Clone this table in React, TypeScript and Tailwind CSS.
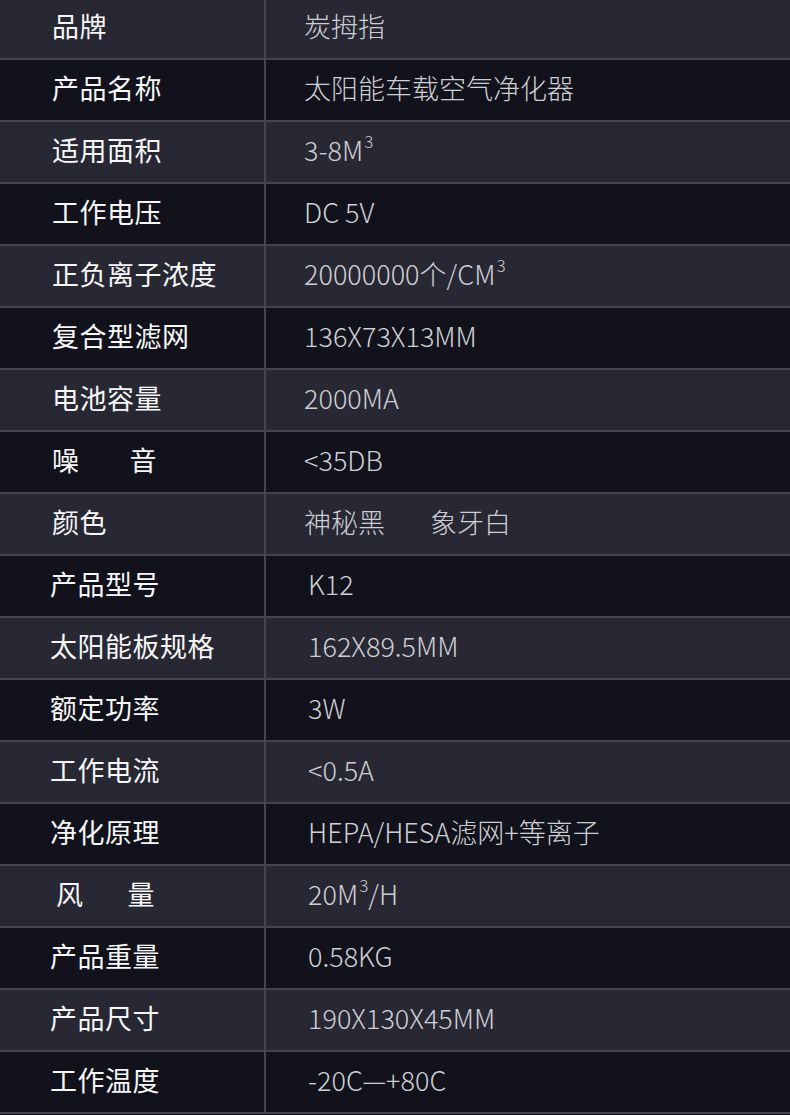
import React from 'react';

interface Spec {
  label: React.ReactNode;
  value: React.ReactNode;
}

const Sup = ({ children }: { children: React.ReactNode }) => (
  <span className="inline-block text-[17px] relative -top-[9px] ml-[1px]">{children}</span>
);

const specs: Spec[] = [
  { label: '品牌', value: '炭拇指' },
  { label: '产品名称', value: '太阳能车载空气净化器' },
  { label: '适用面积', value: <>3-8M<Sup>3</Sup></> },
  { label: '工作电压', value: 'DC 5V' },
  { label: '正负离子浓度', value: <>20000000个/CM<Sup>3</Sup></> },
  { label: '复合型滤网', value: '136X73X13MM' },
  { label: '电池容量', value: '2000MA' },
  { label: <span className="flex gap-[50px]"><span>噪</span><span>音</span></span>, value: '<35DB' },
  { label: '颜色', value: <span className="flex gap-[45px]"><span>神秘黑</span><span>象牙白</span></span> },
  { label: '产品型号', value: 'K12' },
  { label: '太阳能板规格', value: '162X89.5MM' },
  { label: '额定功率', value: '3W' },
  { label: '工作电流', value: '<0.5A' },
  { label: '净化原理', value: 'HEPA/HESA滤网+等离子' },
  { label: <span className="flex gap-[44px] pl-[6px]"><span>风</span><span>量</span></span>, value: <>20M<Sup>3</Sup>/H</> },
  { label: '产品重量', value: '0.58KG' },
  { label: '产品尺寸', value: '190X130X45MM' },
  { label: '工作温度', value: '-20C—+80C' },
];

export default function App() {
  return (
    <div
      className="w-[790px] h-[1115px] overflow-hidden bg-[#11121b]"
      style={{ fontFamily: '"Noto Sans CJK SC", "Noto Sans", sans-serif' }}
    >
      <div className="-mt-[2px] border-b-2 border-[#44454f]">
        {specs.map((s, i) => {
          const light = i % 2 === 0;
          const late = i >= 9;
          return (
            <div
              key={i}
              className={`flex h-[62px] border-t-2 border-[#44454f] first:border-t-0 first:h-[60px] ${
                light ? 'bg-[#272833]' : 'bg-[#11121b]'
              }`}
            >
              <div
                className={`w-[264px] flex items-center pb-[4px] text-[27px] tracking-[0.5px] text-[#f7f7f7] ${
                  late ? 'pl-[50px]' : 'pl-[52px]'
                }`}
              >
                {s.label}
              </div>
              <div className="w-[2px] bg-[#44454f]" />
              <div
                className={`flex-1 flex items-center pb-[4px] text-[27px] font-light text-[#cfcfd3] ${
                  late ? 'pl-[42px]' : 'pl-[38px]'
                }`}
              >
                {s.value}
              </div>
            </div>
          );
        })}
      </div>
    </div>
  );
}
